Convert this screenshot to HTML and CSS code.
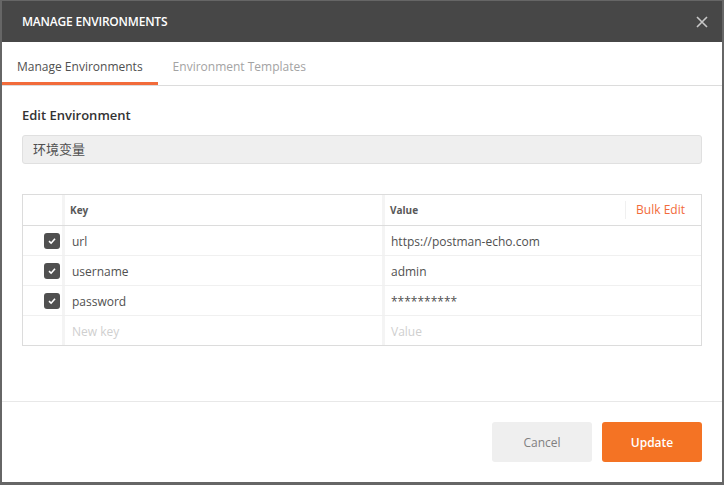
FILE: index.html
```html
<!DOCTYPE html>
<html>
<head>
<meta charset="utf-8">
<link rel="stylesheet" href="styles.css">
</head>
<body>
<div class="modal">
  <div class="modal-header">
    <span class="modal-title">MANAGE ENVIRONMENTS</span>
    <svg class="close" width="12" height="12" viewBox="0 0 12 12"><path d="M1 1 L11 11 M11 1 L1 11" stroke="#c8c8c8" stroke-width="1.6" fill="none"/></svg>
  </div>
  <div class="tabs">
    <div class="tab active">Manage Environments</div>
    <div class="tab">Environment Templates</div>
  </div>
  <div class="content">
    <div class="label">Edit Environment</div>
    <div class="name-input">环境变量</div>
    <div class="kv">
      <div class="kv-row kv-head">
        <div class="c-check"></div>
        <div class="c-key">Key</div>
        <div class="c-val"><span>Value</span><span class="bulk">Bulk Edit</span></div>
      </div>
      <div class="kv-row">
        <div class="c-check"><span class="cb"><svg width="10" height="10" viewBox="0 0 10 10"><path d="M2 5.2 L4.1 7.2 L8 2.8" stroke="#fff" stroke-width="1.6" fill="none"/></svg></span></div>
        <div class="c-key">url</div>
        <div class="c-val">https://postman-echo.com</div>
      </div>
      <div class="kv-row">
        <div class="c-check"><span class="cb"><svg width="10" height="10" viewBox="0 0 10 10"><path d="M2 5.2 L4.1 7.2 L8 2.8" stroke="#fff" stroke-width="1.6" fill="none"/></svg></span></div>
        <div class="c-key">username</div>
        <div class="c-val">admin</div>
      </div>
      <div class="kv-row">
        <div class="c-check"><span class="cb"><svg width="10" height="10" viewBox="0 0 10 10"><path d="M2 5.2 L4.1 7.2 L8 2.8" stroke="#fff" stroke-width="1.6" fill="none"/></svg></span></div>
        <div class="c-key">password</div>
        <div class="c-val">**********</div>
      </div>
      <div class="kv-row">
        <div class="c-check"></div>
        <div class="c-key placeholder">New key</div>
        <div class="c-val placeholder">Value</div>
      </div>
    </div>
  </div>
  <div class="footer">
    <button class="btn btn-cancel">Cancel</button>
    <button class="btn btn-update">Update</button>
  </div>
</div>
</body>
</html>
```

FILE: styles.css
```css
html, body {
  margin: 0;
  padding: 0;
  background: #666666;
  width: 724px;
  height: 485px;
  overflow: hidden;
}
body {
  font-family: "Open Sans", "Noto Sans CJK SC", sans-serif;
  color: #505050;
}
.modal {
  margin: 1px 0 0 2px;
  width: 720px;
  height: 481px;
  background: #fff;
  display: flex;
  flex-direction: column;
}
.modal-header {
  height: 41px;
  background: #474747;
  display: flex;
  align-items: center;
  justify-content: space-between;
  padding: 0 14px 0 20px;
  flex: none;
}
.modal-title {
  color: #fff;
  font-size: 12px;
  font-weight: 600;
  letter-spacing: -0.2px;
}
.tabs {
  display: flex;
  border-bottom: 1px solid #dcdcdc;
  height: 43px;
  flex: none;
}
.tab {
  padding: 16px 15px 6px;
  line-height: 18px;
  font-size: 12px;
  color: #a3a3a3;
  border-bottom: 3px solid transparent;
}
.tab.active {
  color: #505050;
  border-bottom-color: #f26b3a;
}
.content {
  flex: 1;
  padding: 20px 20px 0;
}
.label {
  font-size: 13px;
  font-weight: 600;
  line-height: 18px;
  color: #333;
}
.name-input {
  margin-top: 11px;
  height: 27px;
  line-height: 27px;
  background: #efefef;
  border: 1px solid #e0e0e0;
  border-radius: 3px;
  padding: 0 10px;
  font-size: 13px;
  color: #505050;
}
.kv {
  margin-top: 30px;
  border: 1px solid #dcdcdc;
}
.kv-row {
  display: grid;
  grid-template-columns: 39px 320px 1fr;
  height: 30px;
  box-sizing: border-box;
  border-bottom: 1px solid #f0f0f0;
  font-size: 12px;
}
.kv-row:last-child {
  border-bottom: none;
  height: 29px;
}
.kv-head {
  height: 31px;
  border-bottom: 1px solid #dcdcdc;
  font-size: 10px;
  font-weight: 700;
  color: #585858;
}
.c-check {
  display: flex;
  align-items: center;
  justify-content: flex-end;
  padding-right: 2px;
}
.c-key, .c-val {
  display: flex;
  align-items: center;
  border-left: 3px solid #f4f4f4;
  padding-top: 2px;
}
.c-key {
  padding-left: 7px;
}
.c-val {
  padding-left: 6px;
}
.kv-head .c-key,
.kv-head .c-val {
  padding-top: 0;
}
.kv-head .c-key {
  padding-left: 5px;
}
.kv-head .c-val {
  padding-left: 5px;
  justify-content: space-between;
}
.bulk {
  color: #f26b3a;
  font-size: 12px;
  font-weight: 400;
  border-left: 1px solid #f0f0f0;
  padding: 0 16px 0 10px;
  line-height: 18px;
}
.placeholder {
  color: #cfcfcf;
}
.cb {
  width: 16px;
  height: 16px;
  background: #505050;
  border-radius: 3px;
  display: flex;
  align-items: center;
  justify-content: center;
}
.footer {
  flex: none;
  border-top: 1px solid #e8e8e8;
  padding: 20px 20px 20px;
  display: flex;
  justify-content: flex-end;
  gap: 10px;
}
.btn {
  width: 100px;
  height: 40px;
  border: none;
  border-radius: 3px;
  font-family: "Open Sans", sans-serif;
  font-size: 12px;
}
.btn-cancel {
  background: #efefef;
  color: #808080;
}
.btn-update {
  background: #f47324;
  color: #fff;
  font-weight: 600;
}
```
